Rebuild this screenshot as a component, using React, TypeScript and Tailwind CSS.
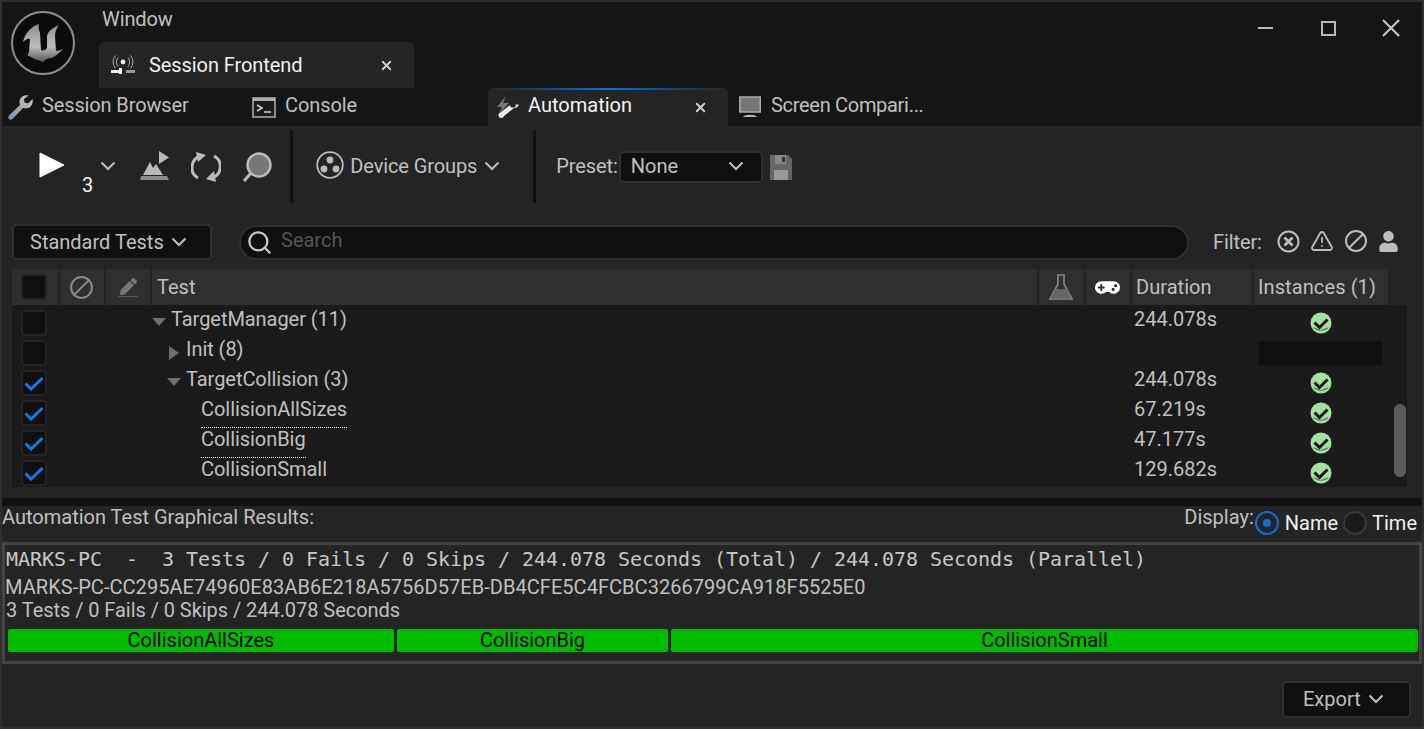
import React from "react";
import { Search, Ban, X, TriangleAlert } from "lucide-react";
import { FaGamepad, FaUser, FaPen } from "react-icons/fa";

const FONT = { fontFamily: "Roboto, sans-serif" };

const Chevron = ({ className }: { className?: string }) => (
  <svg width="16" height="10" viewBox="0 0 16 10" className={className}>
    <path d="M1.5 1.5L8 8L14.5 1.5" fill="none" stroke="currentColor" strokeWidth="2" />
  </svg>
);

const Logo = () => (
  <svg width="66" height="66" viewBox="10 10 66 66" className="shrink-0">
    <defs>
      <linearGradient id="ue" x1="0" y1="0" x2="0" y2="1">
        <stop offset="0" stopColor="#8f8f8f" />
        <stop offset="0.6" stopColor="#bdbdbd" />
        <stop offset="1" stopColor="#555" />
      </linearGradient>
    </defs>
    <circle cx="43" cy="43" r="31" fill="#0b0b0b" stroke="#8e8e8e" strokeWidth="2" />
    <path
      fill="url(#ue)"
      d="M39 24C30 27 25 34 23 42C26 39 28 38 30 39L29 52C28 54 28 55 27 55C32 58 37 60 43 62C46 59 48 58 52 58C57 55 60 52 63 49C60 50 58 51 56 51L55 36C55 31 57 28 59 25C53 28 48 31 47 36L47 48C46 50 43 51 41 50L40 33C39 30 38 27 39 24Z"
    />
  </svg>
);

const CheckBadge = () => (
  <svg width="22" height="22" viewBox="0 0 22 22">
    <circle cx="11" cy="11" r="10.5" fill="#a3e19e" />
    <path d="M4.5 10.5L9.5 15.5L17.5 7.5" fill="none" stroke="#111" strokeWidth="3" />
    <path d="M3 15C6 20 16 20 19 15L11 18Z" fill="#1a1a1a" opacity="0.55" />
  </svg>
);

const Checkbox = ({ checked }: { checked?: boolean }) => (
  <div className="w-[26px] h-[26px] rounded-[4px] bg-[#0f0f0f] border-2 border-[#242424] flex items-center justify-center">
    {checked && (
      <svg width="20" height="15" viewBox="0 0 20 15">
        <path d="M1.5 7.5L7 13L18.5 2" fill="none" stroke="#0a7ee6" strokeWidth="3" />
      </svg>
    )}
  </div>
);

const DropButton = ({ label, className }: { label: string; className: string }) => (
  <div className={`flex items-center rounded-[5px] bg-[#0f0f0f] border-2 border-[#2f2f2f] ${className}`}>
    <span>{label}</span>
    <Chevron className="ml-[7px]" />
  </div>
);

const rows = [
  { name: "TargetManager (11)", indent: 171, arrow: "down", time: "244.078s", ok: true },
  { name: "Init (8)", indent: 186, arrow: "right", empty: true },
  { name: "TargetCollision (3)", indent: 186, arrow: "down", time: "244.078s", ok: true, checked: true },
  { name: "CollisionAllSizes", indent: 201, time: "67.219s", ok: true, checked: true, dotted: true },
  { name: "CollisionBig", indent: 201, time: "47.177s", ok: true, checked: true, dotted: true },
  { name: "CollisionSmall", indent: 201, time: "129.682s", ok: true, checked: true },
];

export default function App() {
  return (
    <div
      style={FONT}
      className="w-[1424px] h-[729px] flex flex-col overflow-hidden bg-[#242424] border-2 border-[#2f2f2f] text-[20px] leading-[28px] text-[#c0c0c0]"
    >
      {/* title bar */}
      <div className="h-[86px] bg-[#151515] flex">
        <div className="pl-[8px] pt-[8px] w-[97px]">
          <Logo />
        </div>
        <div className="flex flex-col w-[315px]">
          <div className="h-[40px] pl-[3px] pt-[3px] tracking-[-0.1px]">Window</div>
          <div className="h-[46px] bg-[#242424] rounded-t-[5px] flex items-center text-[#f0f0f0]">
            <svg width="26" height="22" viewBox="0 0 26 22" className="ml-[11px]">
              <circle cx="13" cy="8" r="2.4" fill="#eee" />
              <path d="M8 3.5a7 7 0 0 0 0 9M18 3.5a7 7 0 0 1 0 9M5.5 1.5a10 10 0 0 0 0 13M20.5 1.5a10 10 0 0 1 0 13" fill="none" stroke="#aaa" strokeWidth="1" />
              <rect x="1" y="16" width="10" height="3" fill="#eee" />
              <rect x="9" y="14" width="3" height="6" fill="#eee" />
              <rect x="16" y="16" width="9" height="3" fill="#999" />
            </svg>
            <span className="ml-[13px] flex-1 tracking-[-0.08px]">Session Frontend</span>
            <X size={15} strokeWidth={3} className="mr-[20px] text-[#d0d0d0]" />
          </div>
        </div>
        <div className="flex-1 flex justify-end text-[#c8c8c8]">
          <div className="flex h-[52px] items-center pr-[22px]">
            <div className="w-[15px] h-[2px] bg-[#b8b8b8]" />
            <div className="ml-[48px] w-[15px] h-[15px] border-2 border-[#b8b8b8]" />
            <svg width="18" height="18" viewBox="0 0 18 18" className="ml-[46px]">
              <path d="M1 1L17 17M17 1L1 17" stroke="#c8c8c8" strokeWidth="2" />
            </svg>
          </div>
        </div>
      </div>

      {/* tab strip */}
      <div className="h-[38px] bg-[#151515] flex items-stretch">
        <div className="w-[241px] flex items-center pl-[6px]">
          <svg width="25" height="25" viewBox="0 0 25 25">
            <defs>
              <linearGradient id="wr" x1="1" y1="0" x2="0" y2="1">
                <stop offset="0" stopColor="#c8c8c8" />
                <stop offset="0.5" stopColor="#a8a8a8" />
                <stop offset="1" stopColor="#6a9abf" />
              </linearGradient>
            </defs>
            <path
              fill="url(#wr)"
              d="M24.5 4L20 8.5L16.5 7.5L16 4L20.5 0.5C16 -0.5 12 2 11.5 6C11.3 7.5 11.8 9 12 10L1.5 20C0 21.5 0 23 1 24C2 25 3.5 25 5 23.5L15 13C16 13.3 17.5 13.6 19 13.3C23 12.7 25.5 8.5 24.5 4Z"
            />
          </svg>
          <span className="ml-[9px] -mt-[5px] tracking-[-0.13px]">Session Browser</span>
        </div>
        <div className="w-[245px] flex items-center pl-[9px]">
          <svg width="24" height="21" viewBox="0 0 24 21">
            <rect x="1" y="1" width="22" height="19" fill="#1c1c1c" stroke="#b0b0b0" strokeWidth="1.5" />
            <rect x="1" y="1" width="22" height="3" fill="#b0b0b0" />
            <path d="M5 8L10 11L5 14" fill="none" stroke="#d0d0d0" strokeWidth="1.5" />
            <path d="M12 15H19" stroke="#d0d0d0" strokeWidth="1.5" />
          </svg>
          <span className="ml-[9px] -mt-[5px] tracking-[-0.1px]">Console</span>
        </div>
        <div className="w-[240px] relative bg-[#242424] rounded-t-[5px] flex items-center pl-[8px] text-[#f4f4f4]">
          <div className="absolute left-0 right-0 top-0 h-[2px] bg-gradient-to-r from-transparent via-[#0a70d6] to-transparent" />
          <svg width="24" height="24" viewBox="0 0 24 24">
            <path d="M10 1L1 12H6L3 19L13 8H7Z" fill="#777" />
            <path d="M23 9C22 12 20 13 18 13L8 21A2.8 2.8 0 1 1 4.5 17.5L14 10C14 13 17 13 19 12C20 11 20 10 19.5 9C21 10 22 10 23 9Z" fill="#eee" />
          </svg>
          <span className="ml-[8px] flex-1 -mt-[5px]">Automation</span>
          <X size={15} strokeWidth={3} className="mr-[20px] text-[#d0d0d0]" />
        </div>
        <div className="flex items-center pl-[11px]">
          <svg width="22" height="22" viewBox="0 0 22 22">
            <rect x="0.75" y="1" width="20.5" height="15" fill="#777" stroke="#aaa" strokeWidth="1.5" />
            <path d="M4 21C6 18 16 18 18 21Z" fill="#bbb" />
          </svg>
          <span className="ml-[10px] -mt-[5px] tracking-[-0.3px]">Screen Compari...</span>
        </div>
      </div>

      {/* toolbar */}
      <div className="h-[98px] flex items-start">
        <svg width="26" height="28" viewBox="0 0 26 28" className="ml-[37px] mt-[25px]">
          <path d="M1 2V26L25 14Z" fill="#fff" stroke="#fff" strokeLinejoin="round" />
        </svg>
        <span className="ml-[17px] mt-[45px] text-[#f4f4f4]">3</span>
        <Chevron className="ml-[7px] mt-[35px]" />
        <svg width="30" height="30" viewBox="0 0 30 30" className="ml-[24px] mt-[25px]">
          <path d="M19 0V13L29 6.5Z" fill="#bbb" />
          <path d="M3 24L10 11L13 17L16 13L23 24Z" fill="#bbb" />
          <path d="M1 25H27L29 29H0Z" fill="#8a8a8a" />
        </svg>
        <svg width="30" height="30" viewBox="0 0 30 30" className="ml-[21px] mt-[26px]">
          <path d="M7 26A12 12 0 0 1 10 4M23 4A12 12 0 0 1 21 26" fill="none" stroke="#bbb" strokeWidth="3" />
          <path d="M5 0L15 3L7 10Z" fill="#bbb" />
          <path d="M25 30L15 27L23 19Z" fill="#bbb" />
        </svg>
        <svg width="31" height="31" viewBox="0 0 31 31" className="ml-[21px] mt-[26px]">
          <circle cx="17" cy="13" r="11.5" fill="#777" stroke="#bbb" strokeWidth="2.4" />
          <path d="M9 21L2 29" stroke="#bbb" strokeWidth="3" />
        </svg>
        <div className="ml-[17px] mt-[4px] w-[3px] h-[73px] bg-[#111]" />
        <svg width="28" height="28" viewBox="0 0 28 28" className="ml-[23px] mt-[25px]">
          <circle cx="14" cy="14" r="12.8" fill="none" stroke="#bbb" strokeWidth="1.8" />
          <circle cx="14" cy="9" r="3.4" fill="#bbb" />
          <circle cx="8" cy="18" r="3.4" fill="#bbb" />
          <circle cx="20" cy="18" r="3.4" fill="#bbb" />
        </svg>
        <span className="ml-[6px] mt-[26px] tracking-[-0.1px]">Device Groups</span>
        <Chevron className="ml-[7px] mt-[35px]" />
        <div className="ml-[33px] mt-[4px] w-[3px] h-[73px] bg-[#111]" />
        <span className="ml-[20px] mt-[26px] tracking-[-0.1px]">Preset:</span>
        <DropButton label="None" className="ml-[1px] mt-[25px] w-[144px] h-[32px] pl-[10px] pb-[2px] justify-between pr-[17px]" />
        <svg width="22" height="25" viewBox="0 0 22 25" className="ml-[7px] mt-[29px]">
          <path d="M0 0H18L22 4V25H0Z" fill="#666" />
          <rect x="5" y="0" width="11" height="9" fill="#888" />
          <rect x="12" y="2" width="3" height="5" fill="#333" />
          <rect x="4" y="15" width="14" height="10" fill="#999" />
        </svg>
      </div>

      {/* filter row */}
      <div className="h-[45px] flex items-start pl-[10px]">
        <DropButton label="Standard Tests" className="w-[200px] h-[36px] pl-[16px]" />
        <div className="ml-[27px] w-[950px] h-[35px] mt-[1px] rounded-full bg-[#0f0f0f] border-2 border-[#2f2f2f] flex items-center pl-[5px] text-[#555]">
          <Search size={27} strokeWidth={2} className="text-[#c8c8c8]" />
          <span className="ml-[8px] -mt-[5px]">Search</span>
        </div>
        <span className="ml-[24px] mt-[4px] tracking-[-0.1px]">Filter:</span>
        <div className="ml-[15px] mt-[5px] flex gap-[10px] items-center text-[#bdbdbd]">
          <svg width="23" height="23" viewBox="0 0 23 23">
            <circle cx="11.5" cy="11.5" r="10" fill="none" stroke="#bdbdbd" strokeWidth="2" />
            <path d="M7.5 7.5L15.5 15.5M15.5 7.5L7.5 15.5" stroke="#bdbdbd" strokeWidth="2.8" />
          </svg>
          <TriangleAlert size={24} strokeWidth={1.8} />
          <Ban size={24} strokeWidth={2} className="-scale-x-100" />
          <FaUser size={21} />
        </div>
      </div>

      {/* test table */}
      <div className="ml-[10px] h-[218px] flex flex-col">
        <div className="w-[1376px] h-[36px] bg-[#2f2f2f] flex shrink-0">
          <div className="w-[46px] flex items-center pl-[9px]">
            <div className="w-[26px] h-[26px] rounded-[4px] bg-[#0f0f0f] border-2 border-[#242424]" />
          </div>
          <div className="w-[46px] border-l-2 border-[#242424] flex items-center justify-center text-[#8a8a8a]">
            <Ban size={25} strokeWidth={2} className="-scale-x-100 -ml-[2px]" />
          </div>
          <div className="w-[46px] border-l-2 border-[#242424] flex flex-col items-center justify-center text-[#777]">
            <FaPen size={17} />
            <div className="w-[20px] h-[1px] bg-[#555] mt-[1px]" />
          </div>
          <div className="w-[887px] border-l-2 border-[#242424] flex items-center pl-[5px]">Test</div>
          <div className="w-[47px] border-l-2 border-[#242424] flex items-center justify-center pr-[2px]">
            <svg width="26" height="28" viewBox="0 0 26 28">
              <path d="M9 2H17M10 2V11L2 26H24L16 11V2" fill="none" stroke="#888" strokeWidth="1.6" />
              <path d="M7 16H19L23 25H3Z" fill="#666" />
            </svg>
          </div>
          <div className="w-[46px] border-l-2 border-[#242424] flex items-center justify-center text-[#fff] pr-[2px]">
            <FaGamepad size={25} />
          </div>
          <div className="w-[122px] border-l-2 border-[#242424] flex items-center pl-[4px] tracking-[0.05px]">Duration</div>
          <div className="w-[136px] border-l-2 border-[#242424] flex items-center pl-[4px] tracking-[0.1px]">Instances (1)</div>
        </div>
        <div className="w-[1395px] h-[182px] bg-[#1a1a1a] flex">
          <div className="flex-1 flex flex-col">
            {rows.map((r) => (
              <div key={r.name} className="h-[30px] flex shrink-0 relative">
                <div className="w-[46px] pl-[9px] pt-[5px]">
                  <Checkbox checked={r.checked} />
                </div>
                <div className="w-[1072px] flex" style={{ paddingLeft: r.indent - 58 }}>
                  <span className={`relative tracking-[-0.05px] ${r.dotted ? "h-[33px] border-b border-dotted border-white" : "h-[28px]"}`}>
                    {r.arrow === "down" && (
                      <span className="absolute -left-[19px] top-[13px] w-0 h-0 border-x-[7px] border-x-transparent border-t-[8px] border-t-[#6e6e6e]" />
                    )}
                    {r.arrow === "right" && (
                      <span className="absolute -left-[17px] top-[11px] w-0 h-0 border-y-[7px] border-y-transparent border-l-[10px] border-l-[#6e6e6e]" />
                    )}
                    {r.name}
                  </span>
                </div>
                <div className="w-[122px] pl-[4px]">{r.time}</div>
                <div className="w-[136px] flex justify-center pt-[7px] pl-[2px]">
                  {r.ok && <CheckBadge />}
                  {r.empty && <div className="w-[123px] h-[24px] mt-[-1px] -ml-[2px] bg-[#0f0f0f]" />}
                </div>
              </div>
            ))}
          </div>
          <div className="w-[19px] pt-[99px] pl-[6px]">
            <div className="w-[12px] h-[73px] rounded-full bg-[#5c5c5c]" />
          </div>
        </div>
      </div>

      {/* splitter */}
      <div className="h-[8px] mt-[11px] bg-[#111]" />

      {/* graphical results */}
      <div className="flex items-start h-[36px]">
        <span className="-mt-[3px] flex-1">Automation Test Graphical Results:</span>
        <span className="-mt-[3px] mr-[1px]">Display:</span>
        <div className="mt-[3px] flex items-center text-[#f0f0f0] pr-[5px]">
          <div className="w-[24px] h-[24px] rounded-full border-[2.5px] border-[#0a70d6] flex items-center justify-center">
            <div className="w-[8px] h-[8px] rounded-full bg-[#0a70d6]" />
          </div>
          <span className="ml-[6px]">Name</span>
          <div className="ml-[5px] w-[24px] h-[24px] rounded-full border-2 border-[#383838] bg-[#1a1a1a]" />
          <span className="ml-[5px]">Time</span>
        </div>
      </div>

      <div className="h-[122px] border-[3px] border-[#444] px-[1px] flex flex-col">
        <div className="h-[28px] tracking-[-0.04px] text-[#c8c8c8] whitespace-pre font-['DejaVu_Sans_Mono',monospace]">
          {"MARKS-PC  -  3 Tests / 0 Fails / 0 Skips / 244.078 Seconds (Total) / 244.078 Seconds (Parallel)"}
        </div>
        <div className="h-[23px] tracking-[0.04px] -ml-[1px]">MARKS-PC-CC295AE74960E83AB6E218A5756D57EB-DB4CFE5C4FCBC3266799CA918F5525E0</div>
        <div className="h-[23px] tracking-[-0.05px]">3 Tests / 0 Fails / 0 Skips / 244.078 Seconds</div>
        <div className="mt-[10px] flex gap-[3px] pl-[2px] text-black h-[23px] leading-[23px]">
          <div className="w-[386px] bg-[#00bb00] rounded-[2px] text-center">CollisionAllSizes</div>
          <div className="w-[271px] bg-[#00bb00] rounded-[2px] text-center">CollisionBig</div>
          <div className="w-[747px] bg-[#00bb00] rounded-[2px] text-center">CollisionSmall</div>
        </div>
      </div>

      <div className="flex justify-end pr-[11px] pt-[17px]">
        <DropButton label="Export" className="w-[129px] h-[37px] pl-[19px] pb-[2px]" />
      </div>
    </div>
  );
}
